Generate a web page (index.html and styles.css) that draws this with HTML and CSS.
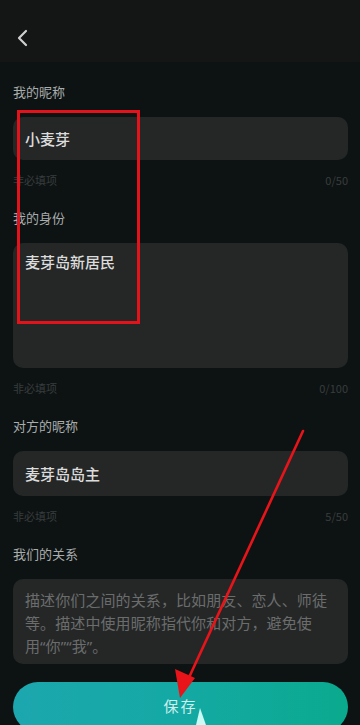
FILE: index.html
```html
<!DOCTYPE html>
<html lang="zh">
<head>
<meta charset="utf-8">
<link rel="stylesheet" href="styles.css">
</head>
<body>
<div class="screen">
  <header class="header">
    <svg class="back" width="14" height="18" viewBox="0 0 14 18"><path d="M10 2 L3 9 L10 16" fill="none" stroke="#cfcfcf" stroke-width="2.2" stroke-linecap="round" stroke-linejoin="round"/></svg>
  </header>
  <main class="content">
    <section class="field">
      <div class="label">我的昵称</div>
      <div class="box input">小麦芽</div>
      <div class="hint"><span>非必填项</span><span>0/50</span></div>
    </section>
    <section class="field">
      <div class="label">我的身份</div>
      <div class="box area tall">麦芽岛新居民</div>
      <div class="hint"><span>非必填项</span><span>0/100</span></div>
    </section>
    <section class="field">
      <div class="label">对方的昵称</div>
      <div class="box input big">麦芽岛岛主</div>
      <div class="hint"><span>非必填项</span><span>5/50</span></div>
    </section>
    <section class="field last">
      <div class="label">我们的关系</div>
      <div class="box area placeholder">描述你们之间的关系，比如朋友、恋人、师徒等。描述中使用昵称指代你和对方，避免使<br>用<span class="q">“</span>你<span class="q">”“</span>我<span class="q">”</span>。</div>
    </section>
    <button class="save">保存</button>
  </main>
  <div class="mark-rect"></div>
  <svg class="mark-arrow" width="360" height="725" viewBox="0 0 360 725">
    <line x1="303" y1="431" x2="186" y2="684" stroke="#e8141a" stroke-width="2.6" stroke-linecap="round"/>
    <polygon points="180,698 175,669 195,678" fill="#e8141a"/>
    <polygon points="200,708 196,725 206,725" fill="#c9fbf4"/>
  </svg>
</div>
</body>
</html>
```
FILE: styles.css
```css
* { box-sizing: border-box; }
html, body { margin: 0; padding: 0; }
body {
  background: #0d1313;
  font-family: "Noto Sans CJK SC", "Noto Sans", sans-serif;
}
.screen {
  position: relative;
  width: 360px;
  height: 725px;
  overflow: hidden;
  background: #0d1313;
}
.header {
  height: 62px;
  background: #141515;
  display: flex;
  align-items: center;
  padding-left: 16px;
  padding-top: 14px;
}
.back { display: block; }
.content {
  padding: 21px 12px 0 13px;
  display: flex;
  flex-direction: column;
}
.field {
  display: flex;
  flex-direction: column;
  margin-bottom: 21px;
}
.field.last { margin-bottom: 18px; }
.label {
  font-size: 13px;
  line-height: 18px;
  color: #a9acac;
  margin-bottom: 16px;
}
.box {
  background: #252727;
  border-radius: 10px;
  color: #dcdcdc;
  font-size: 15px;
  font-weight: 500;
  padding: 0 12px;
}
.input {
  height: 43px;
  display: flex;
  align-items: center;
}
.input.big { height: 45px; }
.area {
  padding-top: 9px;
  line-height: 23px;
}
.area.tall { height: 125px; padding-top: 7px; }
.placeholder {
  height: 85px;
  color: #6b6d6d;
  font-weight: 400;
  letter-spacing: 0.1px;
}
.q { font-family: "Noto Sans", sans-serif; }
.hint {
  margin-top: 12px;
  display: flex;
  justify-content: space-between;
  font-size: 11px;
  line-height: 16px;
  color: #383d3d;
}
.save {
  height: 50px;
  border: none;
  border-radius: 25px;
  background: linear-gradient(90deg, #1ca7ae 0%, #14a9a4 50%, #0aaa8e 100%);
  color: #cdeeed;
  font-family: inherit;
  font-size: 15px;
  letter-spacing: 2px;
  padding: 0 0 4px 0;
}
.mark-rect {
  position: absolute;
  left: 17px;
  top: 110px;
  width: 123px;
  height: 214px;
  border: 3px solid #e4121a;
}
.mark-arrow {
  position: absolute;
  left: 0;
  top: 0;
  pointer-events: none;
}
```
